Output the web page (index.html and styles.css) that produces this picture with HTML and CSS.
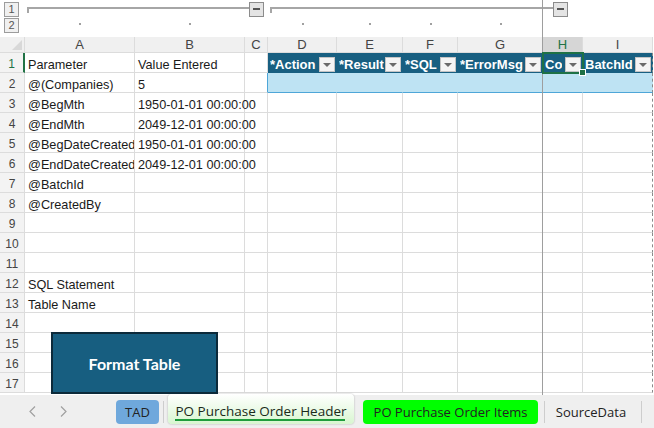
FILE: index.html
```html
<!DOCTYPE html>
<html lang="en">
<head>
    <meta charset="UTF-8">
    <meta name="viewport" content="width=device-width, initial-scale=1.0">
    <title>PO Purchase Order Header</title>
    <link rel="stylesheet" href="styles.css">
</head>
<body>
    <div class="sheet">
        <div class="outline">
            <span class="level level-1">1</span>
            <span class="level level-2">2</span>
            <div class="group group-ab"><span class="bracket"></span><span class="collapse"></span></div>
            <div class="group group-dg"><span class="bracket"></span><span class="collapse"></span></div>
            <span class="dot dot-a"></span>
            <span class="dot dot-b"></span>
            <span class="dot dot-d"></span>
            <span class="dot dot-e"></span>
            <span class="dot dot-f"></span>
            <span class="dot dot-g"></span>
        </div>

        <div class="grid">
            <!-- column letters -->
            <div class="corner"></div>
            <div class="ch">A</div>
            <div class="ch">B</div>
            <div class="ch">C</div>
            <div class="ch">D</div>
            <div class="ch">E</div>
            <div class="ch">F</div>
            <div class="ch">G</div>
            <div class="ch ch-sel">H</div>
            <div class="ch">I</div>

            <!-- row 1: parameter headers + table headers -->
            <div class="rh rh-sel">1</div>
            <div class="c">Parameter</div>
            <div class="c">Value Entered</div>
            <div class="c"></div>
            <div class="c th"><span class="th-text">*Action</span><span class="drop"></span></div>
            <div class="c th"><span class="th-text">*Result</span><span class="drop"></span></div>
            <div class="c th"><span class="th-text">*SQL</span><span class="drop"></span></div>
            <div class="c th"><span class="th-text">*ErrorMsg</span><span class="drop"></span></div>
            <div class="c th sel"><span class="th-text">Co</span><span class="drop"></span></div>
            <div class="c th pb"><span class="th-text">BatchId</span><span class="drop"></span></div>

            <div class="rh">2</div>
            <div class="c">@(Companies)</div>
            <div class="c">5</div>
            <div class="c edge"></div>
            <div class="c tb"></div>
            <div class="c tb"></div>
            <div class="c tb"></div>
            <div class="c tb"></div>
            <div class="c tb"></div>
            <div class="c tb pb"></div>

            <div class="rh">3</div>
            <div class="c">@BegMth</div>
            <div class="c spill">1950-01-01 00:00:00</div>
            <div class="c"></div><div class="c"></div><div class="c"></div><div class="c"></div><div class="c"></div><div class="c"></div><div class="c pb"></div>

            <div class="rh">4</div>
            <div class="c">@EndMth</div>
            <div class="c spill">2049-12-01 00:00:00</div>
            <div class="c"></div><div class="c"></div><div class="c"></div><div class="c"></div><div class="c"></div><div class="c"></div><div class="c pb"></div>

            <div class="rh">5</div>
            <div class="c">@BegDateCreated</div>
            <div class="c spill">1950-01-01 00:00:00</div>
            <div class="c"></div><div class="c"></div><div class="c"></div><div class="c"></div><div class="c"></div><div class="c"></div><div class="c pb"></div>

            <div class="rh">6</div>
            <div class="c">@EndDateCreated</div>
            <div class="c spill">2049-12-01 00:00:00</div>
            <div class="c"></div><div class="c"></div><div class="c"></div><div class="c"></div><div class="c"></div><div class="c"></div><div class="c pb"></div>

            <div class="rh">7</div>
            <div class="c">@BatchId</div>
            <div class="c"></div><div class="c"></div><div class="c"></div><div class="c"></div><div class="c"></div><div class="c"></div><div class="c"></div><div class="c pb"></div>

            <div class="rh">8</div>
            <div class="c">@CreatedBy</div>
            <div class="c"></div><div class="c"></div><div class="c"></div><div class="c"></div><div class="c"></div><div class="c"></div><div class="c"></div><div class="c pb"></div>

            <div class="rh">9</div>
            <div class="c"></div><div class="c"></div><div class="c"></div><div class="c"></div><div class="c"></div><div class="c"></div><div class="c"></div><div class="c"></div><div class="c pb"></div>

            <div class="rh">10</div>
            <div class="c"></div><div class="c"></div><div class="c"></div><div class="c"></div><div class="c"></div><div class="c"></div><div class="c"></div><div class="c"></div><div class="c pb"></div>

            <div class="rh">11</div>
            <div class="c"></div><div class="c"></div><div class="c"></div><div class="c"></div><div class="c"></div><div class="c"></div><div class="c"></div><div class="c"></div><div class="c pb"></div>

            <div class="rh">12</div>
            <div class="c">SQL Statement</div>
            <div class="c"></div><div class="c"></div><div class="c"></div><div class="c"></div><div class="c"></div><div class="c"></div><div class="c"></div><div class="c pb"></div>

            <div class="rh">13</div>
            <div class="c">Table Name</div>
            <div class="c"></div><div class="c"></div><div class="c"></div><div class="c"></div><div class="c"></div><div class="c"></div><div class="c"></div><div class="c pb"></div>

            <div class="rh">14</div>
            <div class="c"></div><div class="c"></div><div class="c"></div><div class="c"></div><div class="c"></div><div class="c"></div><div class="c"></div><div class="c"></div><div class="c pb"></div>

            <div class="rh">15</div>
            <div class="c"></div><div class="c"></div><div class="c"></div><div class="c"></div><div class="c"></div><div class="c"></div><div class="c"></div><div class="c"></div><div class="c pb"></div>

            <div class="rh">16</div>
            <div class="c"></div><div class="c"></div><div class="c"></div><div class="c"></div><div class="c"></div><div class="c"></div><div class="c"></div><div class="c"></div><div class="c pb"></div>

            <div class="rh">17</div>
            <div class="c"></div><div class="c"></div><div class="c"></div><div class="c"></div><div class="c"></div><div class="c"></div><div class="c"></div><div class="c"></div><div class="c pb"></div>
        </div>

        <div class="freeze"></div>
        <button class="format-btn" type="button">Format Table</button>
    </div>

    <div class="tabs">
        <svg class="nav" width="7" height="11" viewBox="0 0 7 11"><polyline points="6,0.5 1,5.5 6,10.5" fill="none" stroke="#a0a0a0" stroke-width="1.2"/></svg>
        <svg class="nav nav-next" width="7" height="11" viewBox="0 0 7 11"><polyline points="1,0.5 6,5.5 1,10.5" fill="none" stroke="#a0a0a0" stroke-width="1.2"/></svg>
        <span class="tab tab-tad">TAD</span>
        <span class="sep"></span>
        <span class="tab tab-active">PO Purchase Order Header</span>
        <span class="tab tab-items">PO Purchase Order Items</span>
        <span class="sep sep-items"></span>
        <span class="tab tab-plain">SourceData</span>
        <span class="sep"></span>
    </div>
</body>
</html>
```

FILE: styles.css
```css
body {
    margin: 0;
    width: 654px;
    height: 428px;
    overflow: hidden;
    background: #fff;
    font-family: "Liberation Sans", Arial, sans-serif;
    color: #1a1a1a;
}

.sheet {
    position: relative;
    height: 395px;
    overflow: hidden;
}

/* outline (grouping) bar */
.outline {
    display: grid;
    grid-template-columns: 25px 110px 110px 23px 69px 66px 55px 85px 40px 70px;
    grid-template-rows: 18px 19px;
    height: 37px;
}

.level {
    grid-column: 1;
    width: 15px;
    height: 15px;
    margin-left: 4px;
    box-sizing: border-box;
    border: 1px solid #9c9c9c;
    background: #f0f0f0;
    font-size: 11px;
    line-height: 13px;
    text-align: center;
    color: #555;
}

.level-1 {
    grid-row: 1;
    margin-top: 2px;
}

.level-2 {
    grid-row: 2;
}

.group {
    grid-row: 1;
    display: flex;
    align-items: flex-start;
    padding-left: 2px;
}

.group-ab {
    grid-column: 2 / 5;
    padding-right: 4px;
}

.group-dg {
    grid-column: 5 / 10;
    padding-right: 15px;
}

.bracket {
    flex: 1;
    margin-top: 7px;
    height: 4px;
    border-top: 2px solid #a6a6a6;
    border-left: 2px solid #a6a6a6;
}

.collapse {
    position: relative;
    width: 15px;
    height: 15px;
    margin-top: 2px;
    box-sizing: border-box;
    border: 1px solid #8c8c8c;
    background: #e4e4e4;
}

.collapse::before {
    content: "";
    position: absolute;
    left: 3px;
    top: 5px;
    width: 7px;
    height: 2px;
    background: #555;
}

.dot {
    grid-row: 2;
    justify-self: center;
    align-self: start;
    width: 2px;
    height: 2px;
    margin-top: 5px;
    background: #a0a0a0;
}

.dot-a { grid-column: 2; }
.dot-b { grid-column: 3; }
.dot-d { grid-column: 5; }
.dot-e { grid-column: 6; }
.dot-f { grid-column: 7; }
.dot-g { grid-column: 8; }

/* cells */
.grid {
    display: grid;
    grid-template-columns: 25px 110px 110px 23px 69px 66px 55px 85px 40px 70px;
    grid-template-rows: 16px repeat(17, 20px);
    font-size: 12.7px;
}

.grid > div {
    box-sizing: border-box;
    border-right: 1px solid #dcdcdc;
    border-bottom: 1px solid #dcdcdc;
    white-space: nowrap;
    overflow: hidden;
}

.corner {
    position: relative;
    background: #f0f0f0;
}

.corner::after {
    content: "";
    position: absolute;
    right: 2px;
    bottom: 2px;
    border-left: 10px solid transparent;
    border-bottom: 10px solid #d8d8d8;
}

.ch {
    background: #f0f0f0;
    color: #444;
    font-size: 13px;
    text-align: center;
    line-height: 15px;
}

.ch-sel {
    background: #d6d6d6;
    color: #217346;
}

.rh {
    background: #f3f3f3;
    color: #444;
    font-size: 12px;
    text-align: center;
    padding-top: 2px;
    line-height: 18px;
}

.grid > .rh-sel {
    color: #217346;
    border-right: 2px solid #217346;
}

.c {
    padding: 3px 0 0 3px;
    line-height: 18px;
}

.grid > .spill {
    position: relative;
    overflow: visible;
    z-index: 1;
}

.grid > .th {
    display: flex;
    align-items: center;
    justify-content: space-between;
    padding: 4px 1px 0 2px;
    background: #185f81;
    border-color: #185f81;
    color: #fff;
    font-size: 13px;
    font-weight: bold;
    line-height: 15px;
}

.th-text {
    min-width: 0;
    overflow: hidden;
}

.drop {
    position: relative;
    flex: none;
    width: 16px;
    height: 15px;
    box-sizing: border-box;
    border: 1px solid #c4c4c4;
    background: #f4f4f4;
}

.drop::after {
    content: "";
    position: absolute;
    left: 3px;
    top: 5px;
    border-left: 4px solid transparent;
    border-right: 4px solid transparent;
    border-top: 4px solid #6a6a6a;
}

.grid > .sel {
    position: relative;
    overflow: visible;
    outline: 2px solid #1e7145;
    outline-offset: -1px;
    z-index: 2;
}

.sel::after {
    content: "";
    position: absolute;
    right: -4px;
    bottom: -4px;
    width: 5px;
    height: 5px;
    background: #1e7145;
    border: 1px solid #fff;
}

.grid > .tb {
    background: #bee3f3;
    border-right-color: #bee3f3;
    border-bottom: 1px solid #4ea6d8;
}

.grid > .edge {
    border-right-color: #4ea6d8;
}

.grid > .pb {
    border-right: 1px dashed #8a8a8a;
}

.freeze {
    position: absolute;
    left: 542px;
    top: 0;
    bottom: 0;
    width: 1px;
    background: #9e9e9e;
    z-index: 1;
}

.format-btn {
    position: absolute;
    left: 51px;
    top: 332px;
    width: 167px;
    height: 62px;
    margin: 0;
    padding: 0;
    background: #175e80;
    border: 2px solid #0c2a3a;
    color: #fff;
    font-family: Lato, "Open Sans", sans-serif;
    font-size: 16px;
    font-weight: bold;
    z-index: 3;
}

/* sheet tabs */
.tabs {
    display: flex;
    align-items: center;
    height: 33px;
    padding-left: 29px;
    background: #efefef;
    font-family: "Open Sans", "Noto Sans", sans-serif;
    font-size: 13px;
    color: #222;
}

.nav-next {
    margin-left: 24px;
}

.tab {
    box-sizing: border-box;
    height: 24px;
    line-height: 24px;
    text-align: center;
    border-radius: 4px;
    white-space: nowrap;
}

.tab-tad {
    width: 43px;
    margin-left: 49px;
    background: #6fa8dc;
}

.sep {
    width: 1px;
    height: 22px;
    margin-left: 4px;
    background: #cdcdcd;
}

.tab-active {
    position: relative;
    align-self: flex-end;
    width: 186px;
    height: 30px;
    padding-top: 4px;
    line-height: 26px;
    margin: 0 0 4px 4px;
    font-size: 13.5px;
    color: #1a2a1a;
    background: linear-gradient(#ffffff, #d8f6d0);
    box-shadow: 0 0 2px rgba(0, 0, 0, 0.3);
}

.tab-active::after {
    content: "";
    position: absolute;
    left: 7px;
    right: 9px;
    bottom: 3px;
    height: 2px;
    background: #1f9c3c;
}

.tab-items {
    width: 175px;
    margin-left: 9px;
    background: #00ff00;
}

.sep-items {
    margin-left: 6px;
}

.tab-plain {
    width: 92px;
}
```
